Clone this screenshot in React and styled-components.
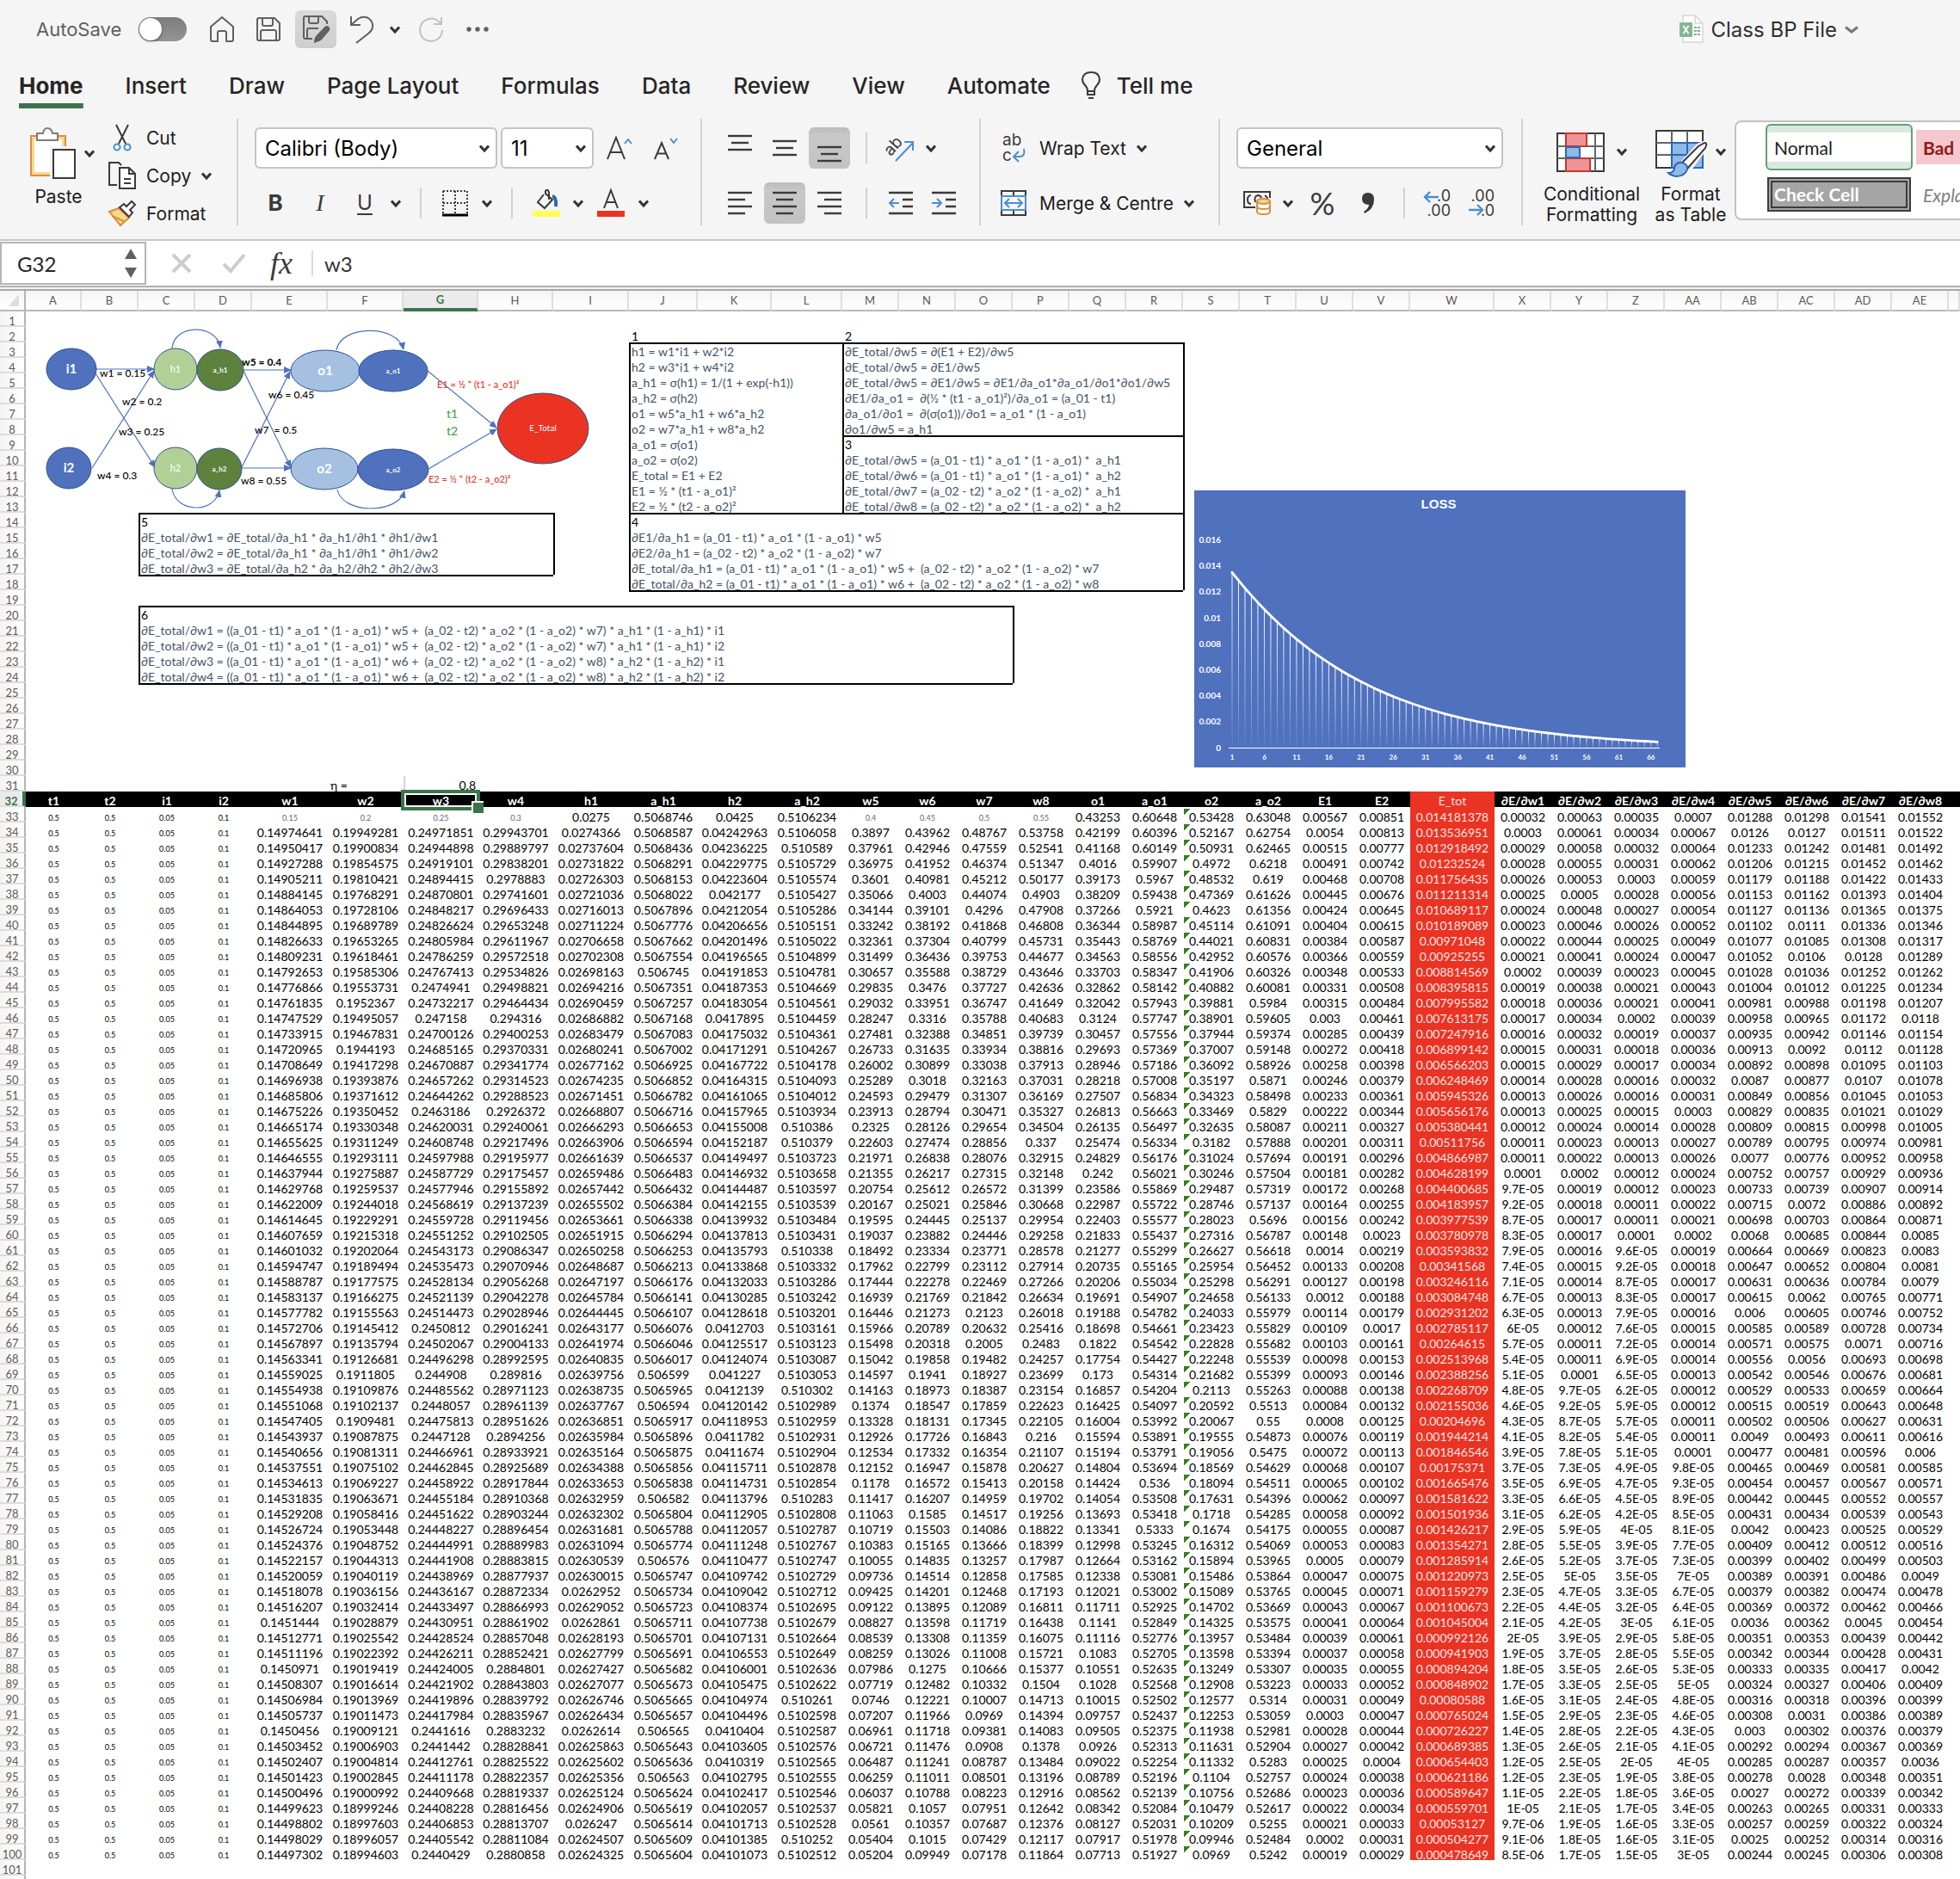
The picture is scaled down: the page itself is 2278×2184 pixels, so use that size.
import React from "react";
import styled, { createGlobalStyle, css } from "styled-components";

const UI = `Inter, "Liberation Sans", sans-serif`;
const SHEET = `Lato, "Open Sans", "DejaVu Sans", sans-serif`;
const GREEN = "#3b744a";
const INK = "#3a3a3a";
const BLUE = "#4a8fd0";

const GlobalStyle = createGlobalStyle`
  * { box-sizing: border-box; }
  html, body, #root { height: 100%; }
  body { margin: 0; overflow: hidden; background: #fff; font-family: ${UI}; color: #262626; }
  button, input, select { font: inherit; color: inherit; margin: 0; }
`;

/* ---------- data: two-layer network trained by back propagation ---------- */

const COLUMNS = [
  ["A", 65], ["B", 66], ["C", 66], ["D", 66], ["E", 88], ["F", 88], ["G", 87], ["H", 87],
  ["I", 88], ["J", 80], ["K", 86], ["L", 82], ["M", 66], ["N", 66], ["O", 66], ["P", 66],
  ["Q", 66], ["R", 66], ["S", 66], ["T", 66], ["U", 66], ["V", 66], ["W", 98], ["X", 66],
  ["Y", 66], ["Z", 66], ["AA", 66], ["AB", 66], ["AC", 66], ["AD", 66], ["AE", 66], ["", 0],
];
const DECIMALS = [1, 1, 2, 1, 8, 8, 8, 8, 8, 7, 8, 7, 5, 5, 5, 5, 5, 5, 5, 5, 5, 5, 9, 5, 5, 5, 5, 5, 5, 5, 5];
const TITLES = [
  "t1", "t2", "i1", "i2", "w1", "w2", "w3", "w4", "h1", "a_h1", "h2", "a_h2", "w5", "w6", "w7", "w8",
  "o1", "a_o1", "o2", "a_o2", "E1", "E2", "E_tot",
  "∂E/∂w1", "∂E/∂w2", "∂E/∂w3", "∂E/∂w4", "∂E/∂w5", "∂E/∂w6", "∂E/∂w7", "∂E/∂w8",
];
const ETA = 0.8;
const FIRST_DATA_ROW = 33;
const LAST_DATA_ROW = 100;
const ROW_COUNT = 102;

const sigmoid = (x) => 1 / (1 + Math.exp(-x));

function train(steps) {
  const t1 = 0.5, t2 = 0.5, i1 = 0.05, i2 = 0.1;
  let w = [0.15, 0.2, 0.25, 0.3, 0.4, 0.45, 0.5, 0.55];
  const out = [];
  for (let n = 0; n < steps; n++) {
    const [w1, w2, w3, w4, w5, w6, w7, w8] = w;
    const h1 = w1 * i1 + w2 * i2;
    const h2 = w3 * i1 + w4 * i2;
    const a1 = sigmoid(h1), a2 = sigmoid(h2);
    const o1 = w5 * a1 + w6 * a2;
    const o2 = w7 * a1 + w8 * a2;
    const p1 = sigmoid(o1), p2 = sigmoid(o2);
    const e1 = 0.5 * (t1 - p1) ** 2;
    const e2 = 0.5 * (t2 - p2) ** 2;
    const d1 = (p1 - t1) * p1 * (1 - p1);
    const d2 = (p2 - t2) * p2 * (1 - p2);
    // the workbook applies the slope of a_h1 to both hidden units
    const slope = a1 * (1 - a1);
    const g1 = (d1 * w5 + d2 * w7) * slope;
    const g2 = (d1 * w6 + d2 * w8) * slope;
    const g = [g1 * i1, g1 * i2, g2 * i1, g2 * i2, d1 * a1, d1 * a2, d2 * a1, d2 * a2];
    out.push([t1, t2, i1, i2, w1, w2, w3, w4, h1, a1, h2, a2, w5, w6, w7, w8, o1, p1, o2, p2, e1, e2, e1 + e2, ...g]);
    w = w.map((v, k) => v - ETA * g[k]);
  }
  return out;
}

function general(v, decimals) {
  if (v < 0.0000995) {
    const [m, e] = v.toExponential(1).split("e-");
    return `${Number(m)}E-${e.padStart(2, "0")}`;
  }
  return String(Number(v.toFixed(decimals)));
}

const DATA = train(LAST_DATA_ROW - FIRST_DATA_ROW + 1);
const LOSS = DATA.slice(1).map((r) => r[22]);

const col = (name) => COLUMNS.findIndex((c) => c[0] === name);

const NOTES = [
  ["J", 2, [
    "1", "h1 = w1*i1 + w2*i2", "h2 = w3*i1 + w4*i2", "a_h1 = σ(h1) = 1/(1 + exp(-h1))", "a_h2 = σ(h2)",
    "o1 = w5*a_h1 + w6*a_h2", "o2 = w7*a_h1 + w8*a_h2", "a_o1 = σ(o1)", "a_o2 = σ(o2)",
    "E_total = E1 + E2", "E1 = ½ * (t1 - a_o1)²", "E2 = ½ * (t2 - a_o2)²",
  ]],
  ["M", 2, [
    "2", "∂E_total/∂w5 = ∂(E1 + E2)/∂w5", "∂E_total/∂w5 = ∂E1/∂w5",
    "∂E_total/∂w5 = ∂E1/∂w5 = ∂E1/∂a_o1*∂a_o1/∂o1*∂o1/∂w5",
    "∂E1/∂a_o1 =  ∂(½ * (t1 - a_o1)²)/∂a_o1 = (a_01 - t1)",
    "∂a_o1/∂o1 =  ∂(σ(o1))/∂o1 = a_o1 * (1 - a_o1)", "∂o1/∂w5 = a_h1",
  ]],
  ["M", 9, [
    "3", "∂E_total/∂w5 = (a_01 - t1) * a_o1 * (1 - a_o1) *  a_h1",
    "∂E_total/∂w6 = (a_01 - t1) * a_o1 * (1 - a_o1) *  a_h2",
    "∂E_total/∂w7 = (a_02 - t2) * a_o2 * (1 - a_o2) *  a_h1",
    "∂E_total/∂w8 = (a_02 - t2) * a_o2 * (1 - a_o2) *  a_h2",
  ]],
  ["J", 14, [
    "4", "∂E1/∂a_h1 = (a_01 - t1) * a_o1 * (1 - a_o1) * w5",
    "∂E2/∂a_h1 = (a_02 - t2) * a_o2 * (1 - a_o2) * w7",
    "∂E_total/∂a_h1 = (a_01 - t1) * a_o1 * (1 - a_o1) * w5 +  (a_02 - t2) * a_o2 * (1 - a_o2) * w7",
    "∂E_total/∂a_h2 = (a_01 - t1) * a_o1 * (1 - a_o1) * w6 +  (a_02 - t2) * a_o2 * (1 - a_o2) * w8",
  ]],
  ["C", 14, [
    "5", "∂E_total/∂w1 = ∂E_total/∂a_h1 * ∂a_h1/∂h1 * ∂h1/∂w1",
    "∂E_total/∂w2 = ∂E_total/∂a_h1 * ∂a_h1/∂h1 * ∂h1/∂w2",
    "∂E_total/∂w3 = ∂E_total/∂a_h2 * ∂a_h2/∂h2 * ∂h2/∂w3",
  ]],
  ["C", 20, [
    "6",
    "∂E_total/∂w1 = ((a_01 - t1) * a_o1 * (1 - a_o1) * w5 +  (a_02 - t2) * a_o2 * (1 - a_o2) * w7) * a_h1 * (1 - a_h1) * i1",
    "∂E_total/∂w2 = ((a_01 - t1) * a_o1 * (1 - a_o1) * w5 +  (a_02 - t2) * a_o2 * (1 - a_o2) * w7) * a_h1 * (1 - a_h1) * i2",
    "∂E_total/∂w3 = ((a_01 - t1) * a_o1 * (1 - a_o1) * w6 +  (a_02 - t2) * a_o2 * (1 - a_o2) * w8) * a_h2 * (1 - a_h2) * i1",
    "∂E_total/∂w4 = ((a_01 - t1) * a_o1 * (1 - a_o1) * w6 +  (a_02 - t2) * a_o2 * (1 - a_o2) * w8) * a_h2 * (1 - a_h2) * i2",
  ]],
];

const FRAMES = [
  ["J", 3, "L", 13], ["M", 3, "R", 8], ["M", 9, "R", 13], ["J", 14, "R", 18], ["C", 14, "H", 17], ["C", 20, "O", 24],
].map(([a, r0, b, r1]) => ({ c0: col(a), c1: col(b), r0, r1 }));

const notes = {};
NOTES.forEach(([c, row, lines]) => lines.forEach((text, k) => { notes[`${row + k}:${col(c)}`] = text; }));

function edges(row, c) {
  const s = [];
  for (const f of FRAMES) {
    if (c >= f.c0 && c <= f.c1 && (row === f.r0 || row === f.r1 + 1)) s.push("inset 0 2px #000");
    if (row >= f.r0 && row <= f.r1 && (c === f.c0 || c === f.c1 + 1)) s.push("inset 2px 0 #000");
  }
  return s.join(", ");
}

/* ---------- window chrome ---------- */

const Window = styled.main`
  height: 100vh;
  display: flex;
  flex-direction: column;
  overflow: hidden;
  background: #fff;
`;

const Chrome = styled.header`
  flex: none;
  background: #f5f5f5;
  border-bottom: 2px solid #c9c9c9;
`;

const TitleBar = styled.div`
  height: 68px;
  display: flex;
  align-items: center;
  padding: 0 118px 0 42px;
  font-size: 22px;
`;

const AutoSave = styled.label`
  display: flex;
  align-items: center;
  gap: 20px;
  color: #606060;
  margin-right: 14px;
`;

const Toggle = styled.input`
  appearance: none;
  width: 56px;
  height: 28px;
  border-radius: 14px;
  background: linear-gradient(#7d7d7d, #949494);
  &::before {
    content: "";
    display: block;
    width: 26px;
    height: 26px;
    margin: 1px;
    border-radius: 50%;
    background: #fff;
    box-shadow: 0 1px 3px rgba(0, 0, 0, 0.5);
  }
`;

const IconButton = styled.button`
  flex: none;
  width: ${(p) => p.$w || 52}px;
  height: ${(p) => p.$h || 48}px;
  padding: 0;
  border: 0;
  display: flex;
  align-items: center;
  justify-content: center;
  background: none;
  border-radius: 6px;
  svg { flex: none; display: block; }
`;

const SavedButton = styled(IconButton)`
  background: linear-gradient(#dadada, #cecece);
  margin: 0 4px;
`;

const FileTitle = styled.button`
  margin-left: auto;
  padding: 0;
  border: 0;
  background: none;
  display: flex;
  align-items: center;
  gap: 9px;
  font-size: 24px;
  color: #303030;
`;

const Tabs = styled.nav`
  height: 62px;
  display: flex;
  padding: 0 22px;
  gap: 49px;
  font-size: 26px;
`;

const Tab = styled.a`
  display: flex;
  align-items: center;
  height: 58px;
  padding-top: 10px;
  color: #262626;
  text-decoration: none;
  white-space: nowrap;
  font-weight: ${(p) => (p.$on ? 700 : 500)};
  border-bottom: 6px solid transparent;
  ${(p) => p.$on && css`
    background: linear-gradient(${GREEN}, ${GREEN}) border-box bottom / 100% 6px no-repeat;
  `}
`;

const TellMe = styled(Tab)`
  gap: 18px;
  margin-left: -14px;
`;

const Ribbon = styled.div`
  height: 148px;
  display: flex;
  padding-top: 8px;
  font-size: 21px;
  color: #1c1c1c;
  overflow: hidden;
`;

const Group = styled.section`
  flex: none;
  width: ${(p) => p.$w}px;
  height: 124px;
  display: flex;
  padding-left: ${(p) => p.$pad}px;
  & + & { box-shadow: -2px 0 #d2d2d2; margin-left: 2px; }
`;

const StylesGroup = styled(Group)`
  flex: 1 0 0;
  min-width: 0;
`;

const TwoRows = styled.div`
  padding-top: 10px;
  display: flex;
  flex-direction: column;
  gap: 16px;
`;

const ToolRow = styled.div`
  height: 48px;
  display: flex;
  align-items: center;
`;

const Rule = styled.span`
  width: 2px;
  height: 36px;
  margin: 0 14px 0 16px;
  background: #d2d2d2;
`;

const BigButton = styled.button`
  flex: none;
  width: ${(p) => p.$w}px;
  padding: 10px 0 0;
  border: 0;
  background: none;
  display: flex;
  flex-direction: column;
  align-items: center;
  line-height: 24px;
  white-space: nowrap;
  margin-right: ${(p) => p.$gap}px;
`;

const BigIcon = styled.span`
  height: 60px;
  display: flex;
  align-items: center;
  gap: ${(p) => p.$gap}px;
  margin-bottom: 9px;
`;

const PasteLabel = styled.span`
  padding-right: 8px;
`;

const Stack = styled.div`
  display: flex;
  flex-direction: column;
`;

const TextButton = styled.button`
  flex: none;
  height: ${(p) => p.$h || 44}px;
  padding: 0;
  border: 0;
  background: none;
  display: flex;
  align-items: center;
  gap: 12px;
  white-space: nowrap;
`;

const Slot = styled.span`
  width: ${(p) => p.$w}px;
  display: flex;
  justify-content: center;
`;

const Glyph = styled.span`
  font-size: ${(p) => p.$size || 26}px;
  line-height: 1;
  color: ${INK};
  font-weight: ${(p) => p.$weight || 400};
  font-style: ${(p) => (p.$italic ? "italic" : "normal")};
  font-family: ${(p) => p.$family || UI};
  text-decoration: ${(p) => (p.$underline ? "underline" : "none")};
  text-underline-offset: 4px;
`;

const SelectBox = styled.span`
  position: relative;
  width: ${(p) => p.$w}px;
  margin-right: ${(p) => p.$gap || 0}px;
  svg { position: absolute; right: 9px; top: 20px; pointer-events: none; }
`;

const Select = styled.select`
  appearance: none;
  width: 100%;
  height: 48px;
  padding: 0 10px;
  border: 2px solid #c4c4c4;
  border-radius: 6px;
  background: #fff;
  color: #000;
  font-size: 24px;
`;

const Gallery = styled.div`
  flex: none;
  width: 400px;
  height: 116px;
  margin-top: 2px;
  padding: 2px 0 0 34px;
  display: grid;
  grid-template-columns: 171px 171px;
  grid-template-rows: 54px 40px;
  gap: 8px 4px;
  align-items: center;
  border: 2px solid #c2c2c2;
  border-radius: 8px;
  background: #fff;
  font-family: ${SHEET};
  font-size: 21px;
`;

const StyleChip = styled.button`
  height: 40px;
  margin: 0;
  padding: 0 8px;
  border: 0;
  text-align: left;
  white-space: nowrap;
  background: #fff;
  ${(p) => p.$kind === "normal" && css`
    height: 54px;
    border: 2px solid #62a074;
    border-radius: 6px;
    background: linear-gradient(#dbe8df 8px, #fff 8px 42px, #dbe8df 42px);
  `}
  ${(p) => p.$kind === "bad" && css`background: #f5c8cf; color: #8f1a14; font-weight: 700;`}
  ${(p) => p.$kind === "check" && css`
    margin: 0 2px;
    padding: 0 2px;
    border: 6px double #3c3c3c;
    background: #a5a5a5;
    color: #fff;
    font-weight: 700;
    line-height: 24px;
  `}
  ${(p) => p.$kind === "explain" && css`color: #7f7f7f; font-style: italic;`}
`;

/* ---------- formula bar ---------- */

const FormulaBar = styled.div`
  flex: none;
  height: 52px;
  display: flex;
  align-items: center;
  font-family: ${SHEET};
  font-size: 24px;
`;

const NameBox = styled.div`
  width: 170px;
  height: 50px;
  display: flex;
  align-items: center;
  justify-content: space-between;
  padding: 0 9px 0 18px;
  border: 2px solid #b6b6b6;
`;

const NameInput = styled.input`
  width: 90px;
  padding: 0;
  border: 0;
  outline: 0;
  background: none;
`;

const FormulaInput = styled.input`
  flex: 1;
  min-width: 0;
  height: 30px;
  padding: 0 13px;
  border: 0;
  border-left: 2px solid #dcdcdc;
  outline: 0;
  background: none;
  color: #333;
`;

const Strip = styled.div`
  flex: none;
  height: 6px;
  border-top: 2px solid #b0b0b0;
  border-bottom: 2px solid #a8a8a8;
  background: #f2f2f2;
`;

/* ---------- sheet ---------- */

const Sheet = styled.div`
  position: relative;
  flex: 1;
  min-height: 0;
  overflow: hidden;
`;

const Grid = styled.table`
  width: 100%;
  table-layout: fixed;
  border-collapse: separate;
  border-spacing: 0;
  font-family: ${SHEET};
  font-size: 14px;
  color: #000;
`;

const Col = styled.col`
  width: ${(p) => (p.$w ? `${p.$w}px` : "auto")};
`;

const ColHead = styled.th`
  height: 24px;
  padding: 0;
  font-size: 13px;
  line-height: 22px;
  font-weight: 400;
  color: #5a5a5a;
  border-bottom: 2px solid #b9b9b9;
  border-right: 2px solid #dedede;
  background: linear-gradient(#f4f4f4, #fff);
  ${(p) => p.$on && css`
    color: ${GREEN};
    font-weight: 700;
    background: #ebebeb;
    border-bottom: 4px solid ${GREEN};
    line-height: 20px;
  `}
`;

const Corner = styled(ColHead)`
  border-right-color: #b5b5b5;
  svg { display: block; margin-left: 10px; }
`;

const Row = styled.tr`
  height: 18px;
  ${(p) => p.$title && css`
    background: #000;
    color: #fff;
    font-weight: 700;
  `}
`;

const RowHead = styled.th`
  height: 18px;
  padding: 6px 0 0;
  font-size: 13px;
  line-height: 10px;
  font-weight: 400;
  color: #5a5a5a;
  border-right: 2px solid #b5b5b5;
  border-bottom: 2px solid #dcdcdc;
  background: linear-gradient(90deg, #f4f4f4, #fff);
  ${(p) => p.$on && css`
    color: ${GREEN};
    font-weight: 700;
    background: #ebebeb;
    border-right: 4px solid ${GREEN};
  `}
`;

const Cell = styled.td`
  height: 18px;
  padding: 4px 3px 0;
  line-height: 14px;
  white-space: pre;
  text-align: ${(p) => p.$align || "center"};
  box-shadow: ${(p) => p.$edges || "none"};
  ${(p) => p.$note && css`color: #44546a;`}
  ${(p) => p.$loss && css`background: #ea3323; color: #fbe6e3; font-weight: 400;`}
  ${(p) => p.$divider && css`box-shadow: inset 2px 0 #d6d6d6;`}
  ${(p) => p.$selected && css`position: relative;`}
`;

const NumberCell = styled(Cell)`
  padding-top: 5px;
  line-height: 13px;
  ${(p) => p.$small && css`
    padding-top: 7px;
    font-size: 9px;
    line-height: 11px;
  `}
  ${(p) => p.$seed && css`color: #5b6880;`}
  ${(p) => p.$flag && css`
    background: linear-gradient(135deg, #3a7d22 50%, transparent 50%) 1px 2px / 8px 8px no-repeat;
  `}
`;

const Selection = styled.span`
  position: absolute;
  inset: -2px -2px -4px -3px;
  border: 4px solid ${GREEN};
  box-shadow: inset 0 0 0 2px #fff;
  &::after {
    content: "";
    position: absolute;
    right: -8px;
    bottom: -7px;
    width: 12px;
    height: 12px;
    background: ${GREEN};
    border: solid #fff;
    border-width: 2px 0 0 2px;
  }
`;

const Diagram = styled.svg`
  position: absolute;
  left: 30px;
  top: 24px;
  font-family: ${SHEET};
  pointer-events: none;
`;

const Chart = styled.svg`
  position: absolute;
  left: 1388px;
  top: 232px;
  font-family: ${SHEET};
`;

/* ---------- icons ---------- */

const Svg = ({ w, h, children, ...rest }) => (
  <svg width={w} height={h} viewBox={`0 0 ${w} ${h}`} fill="none" stroke={INK} strokeWidth="2" overflow="visible" aria-hidden="true" {...rest}>
    {children}
  </svg>
);

const Chevron = ({ color = "#333", w = 12 }) => (
  <Svg w={w} h={9} stroke={color} strokeWidth="3">
    <path d={`M1 1.5 L${w / 2} 7 L${w - 1} 1.5`} />
  </Svg>
);

const HomeIcon = () => (
  <Svg w={30} h={32} stroke="#606060">
    <path d="M2 13 L15 2 L28 13 V28 Q28 30 26 30 H20 V20 Q20 18 18 18 H12 Q10 18 10 20 V30 H4 Q2 30 2 28 Z" strokeLinejoin="round" />
  </Svg>
);

const SaveIcon = () => (
  <Svg w={30} h={30} stroke="#606060">
    <path d="M4 2 H22 L28 8 V26 Q28 28 26 28 H4 Q2 28 2 26 V4 Q2 2 4 2 Z M8 2 V9 Q8 11 10 11 H18 Q20 11 20 9 V2 M6 28 V18 Q6 16 8 16 H22 Q24 16 24 18 V28" />
  </Svg>
);

const SaveEditIcon = () => (
  <Svg w={34} h={34} stroke="#606060">
    <path d="M30 11 V8 L24 2 H5 Q3 2 3 4 V26 Q3 28 5 28 H13 M9 2 V8 Q9 10 11 10 H18 Q20 10 20 8 V2 M7 28 V18 Q7 16 9 16 H20" />
    <path d="M28 13.5 Q31 12 33 15 Q34 17 32.5 19 L23 30 L15 33 Q15 27 18 24 Z" fill="#606060" stroke="none" />
  </Svg>
);

const UndoIcon = () => (
  <Svg w={30} h={34} stroke="#606060">
    <path d="M2 2 V12 H13 M2 12 L10 5 Q16 1 22 4 Q28 8 27 15 Q26 19 22 22 L8 33" />
  </Svg>
);

const RedoIcon = () => (
  <Svg w={30} h={32} stroke="#c2c2c2">
    <path d="M27 2 V10 H18 M26.5 9.5 Q20 2 12 4 Q2 7 2 17 Q3 29 15 30 Q27 29 28 17" />
  </Svg>
);

const MoreIcon = () => (
  <Svg w={28} h={8} stroke="none">
    {[4, 14, 24].map((x) => <circle key={x} cx={x} cy="4" r="2.7" fill="#606060" />)}
  </Svg>
);

const FileIcon = () => (
  <Svg w={28} h={34} stroke="none">
    <path d="M4 1 H18 L27 10 V32 H4 Z" fill="#fff" stroke="#d6d6d6" strokeWidth="1.5" />
    <path d="M18 1 V10 H27" stroke="#d6d6d6" strokeWidth="1.5" />
    <path d="M17 14 h3 v2 h-3z M21 14 h3 v2 h-3z M17 18 h3 v2 h-3z M21 18 h3 v2 h-3z M17 22 h3 v2 h-3z M21 22 h3 v2 h-3z" fill="#7fb08d" />
    <rect x="0" y="9" width="15" height="17" rx="1" fill="#86b794" />
    <path d="M4.5 13 L10.5 22 M10.5 13 L4.5 22" stroke="#fff" strokeWidth="1.8" />
  </Svg>
);

const BulbIcon = () => (
  <Svg w={24} h={34}>
    <path d="M8 24 Q8 20 5 17 Q2 14 2 10 Q3 2 12 2 Q21 2 22 10 Q22 14 19 17 Q16 20 16 24 Z M8 24 V28 H16 V24 M9 32 H15" />
  </Svg>
);

const PasteIcon = () => (
  <Svg w={54} h={60}>
    <rect x="2" y="10" width="40" height="46" fill="#f5d98f" stroke="#dd8c3f" />
    <rect x="6" y="14" width="32" height="38" fill="#fff" stroke="none" />
    <path d="M9 7 H16 Q17 1 21 1 Q26 1 27 7 H33 V15 H9 Z" fill="#fff" stroke="#7b7b7b" />
    <rect x="24" y="22" width="30" height="38" fill="#f5f5f5" stroke="none" />
    <rect x="28" y="26" width="25" height="33" fill="#fff" />
  </Svg>
);

const CutIcon = () => (
  <Svg w={22} h={32}>
    <path d="M4 1 L15 23 M18 1 L7 23" />
    <circle cx="5" cy="27" r="3.5" stroke={BLUE} />
    <circle cx="17" cy="27" r="3.5" stroke={BLUE} />
  </Svg>
);

const CopyIcon = () => (
  <Svg w={32} h={32}>
    <path d="M10 27 H1 V1 H12 L15 4" />
    <path d="M13 7 H24 L31 14 V31 H13 Z M24 7 V14 H31 M18 20 H26 M18 25 H26" fill="#fff" />
  </Svg>
);

const BrushIcon = () => (
  <Svg w={32} h={30}>
    <path d="M1 13 L12 9 L24 20 L14 29 Z" fill="#f5d98f" stroke="#dd8c3f" />
    <path d="M4 18 L18 24 M12 9 L24 20" stroke="#dd8c3f" />
    <path d="M13 8 L18 4 L21 7 L27 1 L31 5 L25 11 L28 14 L24 19 Z" fill="#fff" />
  </Svg>
);

const GrowIcon = ({ up }) => (
  <Svg w={32} h={30}>
    {up
      ? <path d="M1 28 L11 3 L21 28 M4.5 20 H17.5" />
      : <path d="M2 28 L10 9 L18 28 M5 21.5 H15" />}
    <path d={up ? "M21 10 L25 5 L29 10" : "M20 4 L24 9 L28 4"} stroke={BLUE} />
  </Svg>
);

const BorderIcon = () => (
  <Svg w={32} h={32}>
    <path d="M2 2 H30 M2 2 V28 M30 2 V28 M16 2 V28 M2 16 H30" strokeDasharray="2 2" />
    <path d="M1 30 H31" stroke="#000" strokeWidth="3" />
  </Svg>
);

const FillIcon = () => (
  <Svg w={32} h={32}>
    <path d="M13 6 L6 15 L14 22 L23 12 L15 5 V2 Q18 -1 19 4 V12" />
    <path d="M23 8 Q28 9 27 20" stroke="#2b67b2" strokeWidth="4" />
    <rect x="0" y="25" width="32" height="7" fill="#ffff54" stroke="none" />
  </Svg>
);

const FontColorIcon = () => (
  <Svg w={32} h={32}>
    <path d="M8 22 L16 1 L24 22 M11 15 H21" />
    <rect x="0" y="25" width="32" height="7" fill="#ea3323" stroke="none" />
  </Svg>
);

const Lines = ({ rows, h }) => (
  <Svg w={30} h={h} strokeWidth="2.4">
    {rows.map(([x1, x2, y]) => <path key={y} d={`M${x1} ${y} H${x2}`} />)}
  </Svg>
);

const vAlign = (y) => <Lines h={40} rows={[[1, 29, y], [5, 25, y + 8], [1, 29, y + 16]]} />;

const hAlign = (a, b) => <Lines h={28} rows={[[1, 29, 2], [a, b, 10], [1, 29, 18], [a, b, 26]]} />;

const OrientationIcon = () => (
  <Svg w={34} h={34}>
    <text x="2" y="22" fontSize="19" fill={INK} stroke="none" transform="rotate(-48 10 20)">ab</text>
    <path d="M12 32 L32 11 M22 10 H32 V20" stroke={BLUE} />
  </Svg>
);

const IndentIcon = ({ out }) => (
  <Svg w={30} h={28}>
    <path d="M1 2 H29 M17 10 H29 M17 18 H29 M1 26 H29" strokeWidth="2.4" />
    <path d={out ? "M13 14 H2 M7 9 L2 14 L7 19" : "M1 14 H12 M7 9 L12 14 L7 19"} stroke={BLUE} />
  </Svg>
);

const WrapIcon = () => (
  <Svg w={26} h={36}>
    <text x="0" y="15" fontSize="19" fill={INK} stroke="none">ab</text>
    <text x="0" y="33" fontSize="19" fill={INK} stroke="none">c</text>
    <path d="M25 19 Q27 28 20 28 H13 M19 22 L13 28 L19 34" stroke={BLUE} />
  </Svg>
);

const MergeIcon = () => (
  <Svg w={32} h={32}>
    <path d="M2 2 H30 V30 H2 Z M16 2 V8 M16 24 V30" />
    <path d="M2 8 H30 V24 H2 Z M7 16 H25 M11 11 L6 16 L11 21 M21 11 L26 16 L21 21" stroke={BLUE} />
  </Svg>
);

const CurrencyIcon = () => (
  <Svg w={34} h={30}>
    <path d="M15 20 H2 V2 H32 V9" />
    <path d="M10 6 Q6 6 6 11 Q6 16 10 16 M15 14 Q13 7 18 6 Q21 6 22 9 M26 6 Q29 8 29 10" />
    <path d="M17 13 V25 Q17 28 24.5 28 Q32 28 32 25 V13" fill="#fff" stroke="#dd8c3f" />
    <ellipse cx="24.5" cy="13" rx="7.5" ry="3" fill="#f5d98f" stroke="#dd8c3f" />
    <path d="M17 19 Q18 22 24.5 22 Q32 22 32 19" stroke="#dd8c3f" />
  </Svg>
);

const CommaIcon = () => (
  <Svg w={16} h={26} stroke="none">
    <path d="M8 1 Q15 1 15 9 Q15 20 4 25 L3 23 Q9 19 9 15 Q1 15 1 8 Q1 1 8 1 Z" fill={INK} />
  </Svg>
);

const DecimalIcon = ({ more }) => (
  <Svg w={34} h={34}>
    <text x="32" y="15" fontSize="18" textAnchor="end" fill={INK} stroke="none">{more ? ".0" : ".00"}</text>
    <text x="32" y="32" fontSize="18" textAnchor="end" fill={INK} stroke="none">{more ? ".00" : ".0"}</text>
    <path d={more ? "M18 10 H2 M8 4 L2 10 L8 16" : "M2 25 H18 M12 19 L18 25 L12 31"} stroke={BLUE} strokeWidth="2.4" />
  </Svg>
);

const ConditionalIcon = () => (
  <Svg w={56} h={46}>
    <path d="M1 1 H55 V45 H1 Z" fill="#fff" />
    <path d="M11 1 V45 M45 1 V45 M1 16 H55 M1 30 H55" stroke="#666" />
    <path d="M11 1 H35 V16 H11 Z M11 30 H39 V45 H11 Z" fill="#ee9396" stroke="#c8382a" />
    <path d="M11 17 H27 V29 H11 Z" fill="#8fb9e8" stroke="#2b67b2" />
  </Svg>
);

const TableIcon = () => (
  <Svg w={60} h={56}>
    <path d="M1 3 H55 V46 H1 Z" fill="#fff" />
    <path d="M19 3 V46 M37 3 V46 M1 17 H55 M1 31 H55" stroke="#666" />
    <path d="M19 17 H55 V46 H19 Z M37 17 V46 M19 31 H55" fill="#8fb9e8" stroke="#2b67b2" />
    <path d="M57 17 Q61 17 58 23 L38 50 L30 42 L50 20 Z" fill="#fff" stroke="#f5f5f5" strokeWidth="5" />
    <path d="M57 17 Q61 17 58 23 L38 46 L31 40 L50 21 Z" fill="#fff" />
    <path d="M31 40 Q38 42 37 48 Q34 56 24 56 Q18 55 15 52 Q22 52 22 46 Q24 39 31 40 Z" fill="#8fb9e8" stroke="#2b67b2" />
  </Svg>
);

const StepperIcon = () => (
  <Svg w={14} h={36} stroke="none">
    <path d="M7 1 L14 13 H0 Z M0 23 H14 L7 35 Z" fill="#606060" />
  </Svg>
);

const CrossIcon = () => (
  <Svg w={24} h={24} stroke="#cdcdcd" strokeWidth="4"><path d="M2 2 L22 22 M22 2 L2 22" /></Svg>
);

const TickIcon = () => (
  <Svg w={28} h={24} stroke="#cdcdcd" strokeWidth="4"><path d="M2 13 L10 21 L26 2" /></Svg>
);

/* ---------- network drawing ---------- */

const NODES = [
  [83, 429, 29, 24, "#4f71be", "i1", 15, 700], [80, 544, 26, 24, "#4f71be", "i2", 15, 700],
  [204, 429, 25, 24, "#b1d095", "h1", 11, 400], [204, 544, 25, 24, "#b1d095", "h2", 11, 400],
  [256, 430, 27, 24, "#5d823d", "a_h1", 8, 700], [255, 545, 26, 24, "#5d823d", "a_h2", 8, 700],
  [378, 431, 40, 24, "#a5c0e1", "o1", 15, 700], [377, 545, 39, 24, "#a5c0e1", "o2", 15, 700],
  [457, 431, 40, 24, "#4f71be", "a_o1", 8, 700], [457, 546, 41, 24, "#4f71be", "a_o2", 8, 700],
  [631, 498, 53, 41, "#ea3323", "E_Total", 10, 400],
];
const LINKS = [
  "M112 429 H179", "M107 544 L179 431", "M111 434 L180 543", "M283 430 H338", "M283 431 L338 543",
  "M281 543 L337 432", "M281 544 H338", "M497 431 L577 497", "M498 545 L577 499",
  "M200 405 C202 376 252 376 256 404", "M200 568 C204 597 250 597 255 570",
  "M391 407 C396 377 462 377 469 406", "M392 569 C398 598 462 598 470 571",
];
const RED = "#ea3323";
const LABELS = [
  [116, 438, "w1 = 0.15"], [142, 471, "w2 = 0.2"], [138, 506, "w3 = 0.25"], [113, 557, "w4 = 0.3"],
  [281, 425, "w5 = 0.4", "#000", 12, 700], [312, 463, "w6 = 0.45"], [296, 504, "w7\u00a0 = 0.5"], [280, 563, "w8 = 0.55"],
  [508, 451, "E1 = ½ * (t1 - a_o1)²", RED, 11], [498, 561, "E2 = ½ * (t2 - a_o2)²", RED, 11],
  [519, 486, "t1", "#4ea44a", 14], [519, 506, "t2", "#4ea44a", 14],
];

const NetworkDiagram = () => (
  <Diagram width="670" height="240" viewBox="30 362 670 240" role="img" aria-label="Network">
    <defs>
      <marker id="tip" markerWidth="9" markerHeight="8" refX="8" refY="4" orient="auto" markerUnits="userSpaceOnUse">
        <path d="M0 0 L9 4 L0 8 Z" fill="#4f71be" />
      </marker>
    </defs>
    {LINKS.map((d) => <path key={d} d={d} fill="none" stroke="#4f71be" strokeWidth="1.2" markerEnd="url(#tip)" />)}
    {NODES.map(([x, y, rx, ry, fill, text, size, weight]) => (
      <g key={text}>
        <ellipse cx={x} cy={y} rx={rx} ry={ry} fill={fill} stroke="#2f528f" />
        <text x={x} y={y + Math.round(size / 3)} fontSize={size} fontWeight={weight} fill="#fff" textAnchor="middle">{text}</text>
      </g>
    ))}
    {LABELS.map(([x, y, text, fill = "#000", size = 12, weight = 500]) => (
      <text key={text} x={x} y={y} fontSize={size} fontWeight={weight} fill={fill}>{text}</text>
    ))}
  </Diagram>
);

/* ---------- loss chart ---------- */

const px = (k) => 44 + k * 7.49;
const py = (v) => 299.5 - v * 15087;

const LossChart = () => (
  <Chart width="571" height="322" viewBox="0 0 571 322" role="img" aria-label="Loss">
    <defs>
      <linearGradient id="drop" x1="0" y1="0" x2="0" y2="1">
        <stop offset="0" stopColor="#fff" />
        <stop offset="1" stopColor="#fff" stopOpacity="0.05" />
      </linearGradient>
    </defs>
    <rect width="571" height="322" fill="#4f71be" />
    <text x="284" y="21" fontSize="15" fontWeight="700" fill="#fff" textAnchor="middle" fontFamily="Liberation Sans, sans-serif">LOSS</text>
    {[0, 0.002, 0.004, 0.006, 0.008, 0.01, 0.012, 0.014, 0.016].map((v) => (
      <text key={v} x="31" y={py(v) + 3} fontSize="10" fontWeight="700" fill="#fff" textAnchor="end">{v}</text>
    ))}
    {LOSS.map((v, k) => (
      <rect key={k} x={px(k) - 0.5} y={py(v)} width="1" height={299.5 - py(v)} fill="url(#drop)" />
    ))}
    <path d="M40 299.5 H541" stroke="#fff" strokeWidth="1" />
    <polyline points={LOSS.map((v, k) => `${px(k)},${py(v)}`).join(" ")} fill="none" stroke="#fff" strokeWidth="2.8" strokeLinecap="round" />
    {LOSS.map((_, k) => k).filter((k) => k % 5 === 0).map((k) => (
      <text key={k} x={px(k)} y="313" fontSize="8" fontWeight="700" fill="#fff" textAnchor="middle">{k + 1}</text>
    ))}
  </Chart>
);

/* ---------- sheet rows ---------- */

function renderCell(row, c) {
  const key = `${row}:${c}`;
  if (row === 32) {
    const selected = c === 6;
    return (
      <Cell key={key} $loss={c === 22} $selected={selected}>
        {TITLES[c]}
        {selected && <Selection />}
      </Cell>
    );
  }
  if (row >= FIRST_DATA_ROW && row <= LAST_DATA_ROW && c < 31) {
    const seed = row === FIRST_DATA_ROW && ((c >= 4 && c <= 7) || (c >= 12 && c <= 15));
    return (
      <NumberCell key={key} $small={c < 4 || seed} $seed={seed} $loss={c === 22} $flag={c === 18}>
        {general(DATA[row - FIRST_DATA_ROW][c], DECIMALS[c])}
      </NumberCell>
    );
  }
  if (row === 31 && c === 5) return <Cell key={key} $align="left">η =</Cell>;
  if (row === 31 && c === 6) return <Cell key={key} $align="right" $divider>{ETA}</Cell>;
  const text = notes[key];
  return (
    <Cell key={key} $align="left" $note={text && text.length > 1} $edges={edges(row, c)}>{text}</Cell>
  );
}

const Spreadsheet = () => (
  <Sheet>
    <Grid>
      <colgroup>
        <Col $w={30} />
        {COLUMNS.map(([name, w]) => <Col key={name} $w={w} />)}
      </colgroup>
      <thead>
        <tr>
          <Corner><Svg w={12} h={14} stroke="none"><path d="M12 0 V14 H0 Z" fill="#dcdcdc" /></Svg></Corner>
          {COLUMNS.map(([name]) => <ColHead key={name} $on={name === "G"}>{name}</ColHead>)}
        </tr>
      </thead>
      <tbody>
        {Array.from({ length: ROW_COUNT }, (_, k) => k + 1).map((row) => (
          <Row key={row} $title={row === 32}>
            <RowHead $on={row === 32}>{row}</RowHead>
            {COLUMNS.map((_, c) => renderCell(row, c))}
          </Row>
        ))}
      </tbody>
    </Grid>
    <NetworkDiagram />
    <LossChart />
  </Sheet>
);

/* ---------- ribbon ---------- */

const Tool = ({ label, w, children }) => <IconButton $w={w} aria-label={label}>{children}</IconButton>;
const Drop = ({ label }) => <Tool w={24} label={label}><Chevron /></Tool>;

const Pressed = styled(IconButton)`
  width: 48px;
  margin: 0 2px;
  background: linear-gradient(#bcbcbc, #c8c8c8 20%, #c2c2c2);
`;

const Picker = ({ label, value, w, gap }) => (
  <SelectBox $w={w} $gap={gap}>
    <Select aria-label={label} defaultValue={value}><option>{value}</option></Select>
    <Chevron />
  </SelectBox>
);

const TABS = ["Home", "Insert", "Draw", "Page Layout", "Formulas", "Data", "Review", "View", "Automate"];

export default function App() {
  return (
    <Window>
      <GlobalStyle />
      <Chrome>
        <TitleBar>
          <AutoSave>AutoSave<Toggle type="checkbox" role="switch" /></AutoSave>
          <Tool w={54} label="Home"><HomeIcon /></Tool>
          <Tool w={54} label="Save"><SaveIcon /></Tool>
          <SavedButton $w={48} $h={44} aria-label="Save as"><SaveEditIcon /></SavedButton>
          <Tool w={52} label="Undo"><UndoIcon /></Tool>
          <Drop label="Undo history" />
          <Tool w={60} label="Redo"><RedoIcon /></Tool>
          <Tool w={48} label="More"><MoreIcon /></Tool>
          <FileTitle><FileIcon />Class BP File<Chevron w={16} color="#777" /></FileTitle>
        </TitleBar>
        <Tabs>
          {TABS.map((t) => <Tab key={t} href="#" $on={t === "Home"}>{t}</Tab>)}
          <TellMe href="#"><BulbIcon />Tell me</TellMe>
        </Tabs>
        <Ribbon>
          <Group $w={275} $pad={34}>
            <BigButton $w={76} $gap={16}>
              <BigIcon $gap={10}><PasteIcon /><Chevron /></BigIcon>
              <PasteLabel>Paste</PasteLabel>
            </BigButton>
            <Stack>
              <TextButton><Slot $w={32}><CutIcon /></Slot>Cut</TextButton>
              <TextButton><Slot $w={32}><CopyIcon /></Slot>Copy<Chevron /></TextButton>
              <TextButton><Slot $w={32}><BrushIcon /></Slot>Format</TextButton>
            </Stack>
          </Group>

          <Group $w={537} $pad={19}>
            <TwoRows>
              <ToolRow>
                <Picker label="Font" value="Calibri (Body)" w={282} gap={4} />
                <Picker label="Font size" value="11" w={108} gap={4} />
                <Tool w={54} label="Increase font size"><GrowIcon up /></Tool>
                <Tool w={54} label="Decrease font size"><GrowIcon /></Tool>
              </ToolRow>
              <ToolRow>
                <Tool w={48} label="Bold"><Glyph $weight={700}>B</Glyph></Tool>
                <Tool w={56} label="Italic"><Glyph $italic $family={`"Liberation Serif", serif`} $size={28}>I</Glyph></Tool>
                <Tool w={48} label="Underline"><Glyph $underline $size={24}>U</Glyph></Tool>
                <Drop label="Underline options" />
                <Rule />
                <Tool w={50} label="Borders"><BorderIcon /></Tool>
                <Drop label="Border options" />
                <Rule />
                <Tool w={50} label="Fill colour"><FillIcon /></Tool>
                <Drop label="Fill options" />
                <Tool w={52} label="Font colour"><FontColorIcon /></Tool>
                <Drop label="Font colour options" />
              </ToolRow>
            </TwoRows>
          </Group>

          <Group $w={322} $pad={18}>
            <TwoRows>
              <ToolRow>
                <Tool label="Align top">{vAlign(6)}</Tool>
                <Tool label="Align middle">{vAlign(12)}</Tool>
                <Pressed aria-label="Align bottom">{vAlign(19)}</Pressed>
                <Rule />
                <Tool w={48} label="Orientation"><OrientationIcon /></Tool>
                <Drop label="Orientation options" />
              </ToolRow>
              <ToolRow>
                <Tool label="Align left">{hAlign(1, 21)}</Tool>
                <Pressed aria-label="Centre">{hAlign(5, 25)}</Pressed>
                <Tool label="Align right">{hAlign(9, 29)}</Tool>
                <Rule />
                <Tool w={50} label="Decrease indent"><IndentIcon out /></Tool>
                <Tool w={50} label="Increase indent"><IndentIcon /></Tool>
              </ToolRow>
            </TwoRows>
          </Group>

          <Group $w={276} $pad={20}>
            <TwoRows>
              <TextButton $h={48}><Slot $w={36}><WrapIcon /></Slot>Wrap Text<Chevron /></TextButton>
              <TextButton $h={48}><Slot $w={36}><MergeIcon /></Slot>Merge &amp; Centre<Chevron /></TextButton>
            </TwoRows>
          </Group>

          <Group $w={350} $pad={19}>
            <TwoRows>
              <ToolRow><Picker label="Number format" value="General" w={310} /></ToolRow>
              <ToolRow>
                <Tool w={48} label="Currency"><CurrencyIcon /></Tool>
                <Drop label="Currency options" />
                <Tool w={56} label="Percent"><Glyph $size={36} $family={SHEET}>%</Glyph></Tool>
                <Tool w={50} label="Comma"><CommaIcon /></Tool>
                <Rule />
                <Tool w={48} label="Increase decimal"><DecimalIcon more /></Tool>
                <Tool w={54} label="Decrease decimal"><DecimalIcon /></Tool>
              </ToolRow>
            </TwoRows>
          </Group>

          <StylesGroup $pad={22}>
            <BigButton $w={116} $gap={16}>
              <BigIcon $gap={14}><ConditionalIcon /><Chevron /></BigIcon>
              <span>Conditional</span>
              <span>Formatting</span>
            </BigButton>
            <BigButton $w={82} $gap={10}>
              <BigIcon $gap={10}><TableIcon /><Chevron /></BigIcon>
              <span>Format</span>
              <span>as Table</span>
            </BigButton>
            <Gallery>
              <StyleChip $kind="normal">Normal</StyleChip>
              <StyleChip $kind="bad">Bad</StyleChip>
              <StyleChip $kind="check">Check Cell</StyleChip>
              <StyleChip $kind="explain">Explanatory Text</StyleChip>
            </Gallery>
          </StylesGroup>
        </Ribbon>
      </Chrome>

      <FormulaBar>
        <NameBox>
          <NameInput aria-label="Name box" defaultValue="G32" />
          <StepperIcon />
        </NameBox>
        <Tool w={82} label="Cancel"><CrossIcon /></Tool>
        <Tool w={40} label="Enter"><TickIcon /></Tool>
        <Tool w={70} label="Insert function"><Glyph $italic $size={36} $family={`"Liberation Serif", serif`}>fx</Glyph></Tool>
        <FormulaInput aria-label="Formula" defaultValue="w3" />
      </FormulaBar>
      <Strip />
      <Spreadsheet />
    </Window>
  );
}
